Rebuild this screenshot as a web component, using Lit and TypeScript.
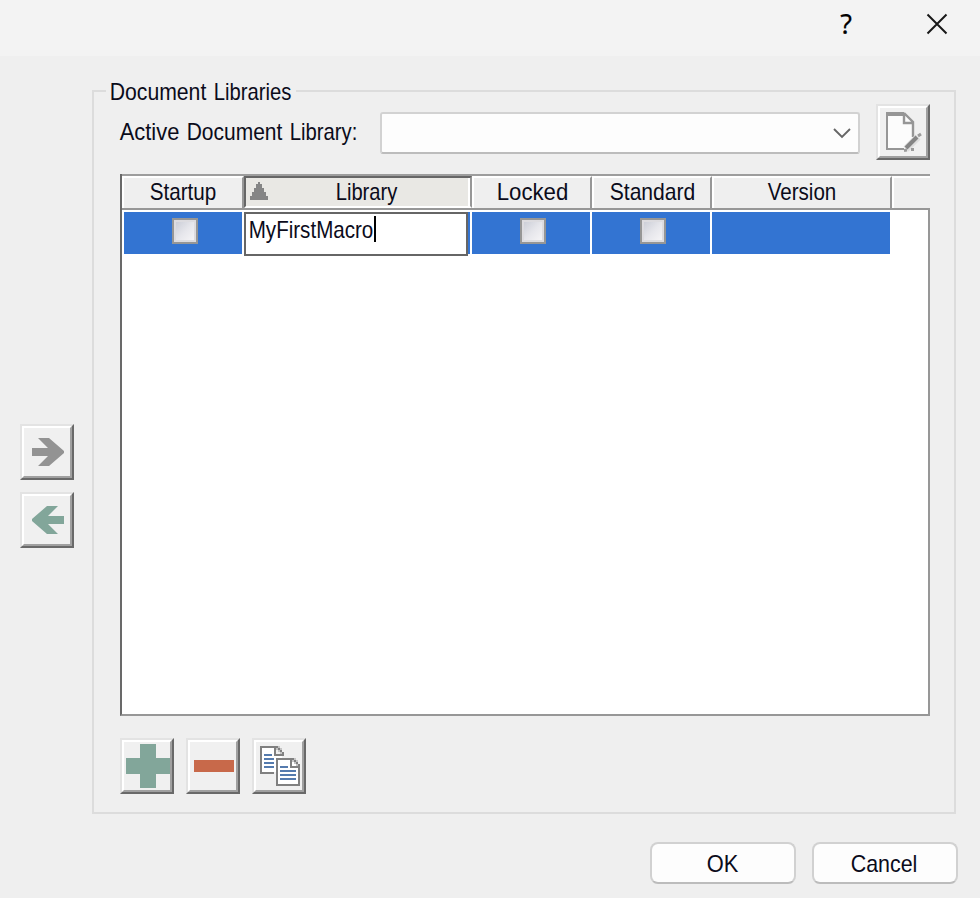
import { LitElement, html, svg, css } from "lit";
import { customElement, property } from "lit/decorators.js";

/** A caption whose words are set in a condensed face and fitted to given widths. */
@customElement("ui-caption")
class UiCaption extends LitElement {
  @property() text = "";
  @property({ type: Array }) widths: number[] = [];
  static styles = css`
    :host { display: inline-flex; gap: 8px; }
    svg { display: block; height: 24px; overflow: visible; }
    text { font: 24px "Liberation Sans", Arial, sans-serif; fill: #0b0b1a; }
  `;
  render() {
    return this.text.split(" ").map((word, i) => {
      const w = this.widths[i];
      return html`<svg width=${w} height="24">
        <text x="-0.3" y="18" textLength=${w + 0.6} lengthAdjust="spacingAndGlyphs">${word}</text>
      </svg>`;
    });
  }
}

const arrow = (color: string, d: string) => svg`<path fill=${color} d=${d} />`;

const icons = {
  right: arrow("#939393", "M18 14H29L44 27V29L29 42H18L28 32H12V24H28Z"),
  left: arrow("#82a69a", "M38 14H27L12 27V29L27 42H38L28 32H44V24H28Z"),
  plus: svg`<path fill="#82a69a" d="M20 6H36V20H50V36H36V50H20V36H6V20H20Z" />`,
  minus: svg`<path fill="#c8694a" d="M8 22H48V34H8Z" />`,
  copy: svg`
    <path fill="#fff" d="M10 10H22V18H30V34H10Z" />
    <path fill="#808080" d="M8 8H24V16H32V18H22V10H10V34H22V36H8Z" />
    <path fill="#808080" d="M24 8H26V10H24ZM26 10H28V12H26ZM28 12H30V14H28ZM30 14H32V16H30Z" />
    <path fill="#c4c4c4" d="M24 10H26V12H24ZM26 12H28V14H26ZM28 14H30V16H28ZM26 8H28V10H26ZM28 10H30V12H28Z" />
    <path fill="#557bae" d="M12 16H20V18H12ZM12 20H22V22H12ZM12 24H22V26H12ZM12 28H22V30H12Z" />
    <path fill="#fff" d="M24 20H40L48 28V48H24Z" />
    <path fill="#808080" fill-rule="evenodd" d="M24 20H40V28H48V48H24ZM26 22V46H46V30H38V22Z" />
    <path fill="#808080" d="M40 20H42V22H40ZM42 22H44V24H42ZM44 24H46V26H44ZM46 26H48V28H46Z" />
    <path fill="#c4c4c4" d="M40 22H42V24H40ZM42 24H44V26H42ZM44 26H46V28H44ZM42 20H44V22H42ZM44 22H46V24H44Z" />
    <path fill="#557bae" d="M28 28H36V30H28ZM28 32H44V34H28ZM28 36H44V38H28ZM28 40H44V42H28Z" />`,
  edit: svg`
    <path fill="#fcfcfc" d="M11 9H28L37 19V38L28 45H11Z" />
    <path fill="#969696" d="M10 8H28V12H12V44H28V46H10Z" />
    <path fill="none" stroke="#969696" stroke-width="2.4" d="M28 9L37 18V33M28 10V19H37" />
    <path fill="none" stroke="#dedede" stroke-width="7" d="M30 45L42 33" />
    <path fill="none" stroke="#858585" stroke-width="4" d="M30 44L41 33" />
    <path fill="none" stroke="#9b9b9b" stroke-width="3" d="M42 32L45 30M28 46.5L31 46M35 45.5H38" />`,
};

/** Square button with a raised two-step bevel. */
@customElement("bevel-button")
class BevelButton extends LitElement {
  @property() icon: keyof typeof icons = "plus";
  static styles = css`
    :host { display: block; }
    .outer {
      box-sizing: border-box; width: 54px; height: 56px; background: #f0f0f0;
      border: 2px solid; border-color: #e3e3e3 #696969 #696969 #e3e3e3;
    }
    .inner {
      box-sizing: border-box; width: 50px; height: 52px;
      border: 2px solid; border-color: #fff #a0a0a0 #a0a0a0 #fff;
    }
    svg { display: block; margin: -4px; }
  `;
  render() {
    const crisp = ["plus", "minus", "copy"].includes(this.icon);
    return html`<div class="outer"><div class="inner">
      <svg width="54" height="56" shape-rendering=${crisp ? "crispEdges" : "auto"}>${icons[this.icon]}</svg>
    </div></div>`;
  }
}

@customElement("app-root")
class AppRoot extends LitElement {
  static styles = css`
    :host { display: block; width: 980px; height: 898px; overflow: hidden; background: #efefef; }
    .titlebar {
      height: 56px; background: #f3f3f3; box-sizing: border-box;
      display: flex; justify-content: flex-end; padding: 0 32px 0 0; gap: 74px;
    }
    .help { font: 27px/48px "Noto Sans", sans-serif; color: #000; -webkit-text-stroke: 0.2px #000; width: 12px; display: flex; justify-content: center; }
    .close { display: block; margin: 13px 0 0; }
    .main { display: flex; padding: 34px 24px 0 20px; gap: 18px; }
    .movers { display: flex; flex-direction: column; gap: 12px; padding-top: 334px; }
    .group {
      box-sizing: border-box; width: 864px; height: 724px; border: 2px solid #dcdcdc;
      padding: 0 24px 0 26px; display: flex; flex-direction: column;
    }
    .legend {
      display: flex; box-sizing: border-box; align-self: flex-start; background: #efefef;
      margin: -10px 0 0 -14px; padding: 0 5px 0 4px; height: 22px; width: 190px;
    }
    .active { display: flex; height: 56px; align-items: center; }
    .active ui-caption { width: 260px; padding-top: 4px; }
    .combo {
      box-sizing: border-box; width: 480px; height: 42px; border: 2px solid #d2d2d2;
      border-bottom-color: #bcbcbc; border-radius: 3px; background: #fdfdfd; margin: 2px 16px 0 0;
      display: flex; align-items: center; justify-content: flex-end; padding-right: 7px;
    }
    .table {
      box-sizing: border-box; width: 810px; height: 542px; margin-top: 14px;
      border-left: 2px solid #696969; border-bottom: 2px solid #979797;
      display: flex; flex-direction: column;
    }
    .head {
      display: grid; grid-template-columns: 122px 228px 120px 120px 180px 38px;
      height: 36px; box-sizing: border-box; border-top: 2px solid #9d9d9d; border-bottom: 2px solid #979797;
    }
    .th {
      box-sizing: border-box; border-top: 2px solid #fff; border-left: 2px solid #fff;
      border-right: 2px solid #979797; display: flex; justify-content: center; padding-top: 4px;
    }
    .th.last { border-right: 0; }
    .th.sorted {
      background: #e9e8e4; border-color: #666 #979797 #fff #666; border-bottom: 2px solid #fff;
      box-shadow: inset -2px 0 #fff; justify-content: flex-start; padding-left: 4px;
    }
    .sort { display: block; margin-right: 68px; }
    .body { flex: 1; background: #fff; border-right: 2px solid #979797; padding: 2px 0 0 2px; }
    .row { display: grid; grid-template: 42px / 118px 226px 118px 118px 178px; gap: 2px; height: 42px; }
    .td { background: #3374d2; display: flex; justify-content: center; padding-top: 6px; }
    .td.edit { padding: 0; justify-content: flex-start; }
    .check {
      box-sizing: border-box; width: 26px; height: 26px; border: 2px solid #969696;
      background: linear-gradient(135deg, #c9ccd6 5%, #e6e6eb 50%, #f5f4f6 90%);
      box-shadow: inset 0 0 0 2px #dddce0;
    }
    .first .check { margin-left: 4px; }
    .mid .check { margin-left: 4px; }
    .editor {
      box-sizing: border-box; width: 224px; height: 44px; border: 2px solid #666;
      background: #fff; display: flex; padding: 2px 0 0 3px;
    }
    .editor ui-caption { padding-top: 4px; }
    .caret { width: 2px; height: 26px; background: #000; margin-left: 1px; }
    .tools { display: flex; gap: 12px; margin-top: 22px; }
    .footer { display: flex; justify-content: flex-end; gap: 16px; padding: 28px 22px 0 0; }
    .push {
      box-sizing: border-box; width: 146px; height: 42px; border: 2px solid #d1d1d1;
      border-bottom-color: #bcbcbc; border-radius: 8px; background: #fdfdfd;
      display: flex; justify-content: center; padding: 10px 2px 0 0;
    }
  `;

  render() {
    return html`
      <div class="titlebar">
        <span class="help">?</span>
        <svg class="close" width="22" height="22"><path d="M1.5 1.5L20.5 20.5M20.5 1.5L1.5 20.5" stroke="#181818" stroke-width="2" /></svg>
      </div>
      <div class="main">
        <div class="movers">
          <bevel-button icon="right"></bevel-button>
          <bevel-button icon="left"></bevel-button>
        </div>
        <div class="group">
          <div class="legend"><ui-caption text="Document Libraries" .widths=${[96, 77]}></ui-caption></div>
          <div class="active">
            <ui-caption text="Active Document Library:" .widths=${[59, 95, 67]}></ui-caption>
            <div class="combo"><svg width="18" height="12"><path d="M1 2L9 10L17 2" fill="none" stroke="#666" stroke-width="1.9" /></svg></div>
            <bevel-button icon="edit"></bevel-button>
          </div>
          <div class="table">
            <div class="head">
              <div class="th"><ui-caption text="Startup" .widths=${[66]}></ui-caption></div>
              <div class="th sorted">
                <svg class="sort" width="18" height="18" shape-rendering="crispEdges"><path fill="#858585" d="M8 0H10V2H12V6H14V10H16V14H18V18H0V14H2V10H4V6H6V2H8Z" /></svg>
                <ui-caption text="Library" .widths=${[61]}></ui-caption>
              </div>
              <div class="th"><ui-caption text="Locked" .widths=${[71]}></ui-caption></div>
              <div class="th"><ui-caption text="Standard" .widths=${[85]}></ui-caption></div>
              <div class="th"><ui-caption text="Version" .widths=${[68]}></ui-caption></div>
              <div class="th last"></div>
            </div>
            <div class="body">
              <div class="row">
                <div class="td first"><span class="check"></span></div>
                <div class="td edit">
                  <div class="editor"><ui-caption text="MyFirstMacro" .widths=${[124]}></ui-caption><span class="caret"></span></div>
                </div>
                <div class="td mid"><span class="check"></span></div>
                <div class="td mid"><span class="check"></span></div>
                <div class="td"></div>
              </div>
            </div>
          </div>
          <div class="tools">
            <bevel-button icon="plus"></bevel-button>
            <bevel-button icon="minus"></bevel-button>
            <bevel-button icon="copy"></bevel-button>
          </div>
        </div>
      </div>
      <div class="footer">
        <div class="push"><ui-caption text="OK" .widths=${[31]}></ui-caption></div>
        <div class="push"><ui-caption text="Cancel" .widths=${[66]}></ui-caption></div>
      </div>
    `;
  }
}
